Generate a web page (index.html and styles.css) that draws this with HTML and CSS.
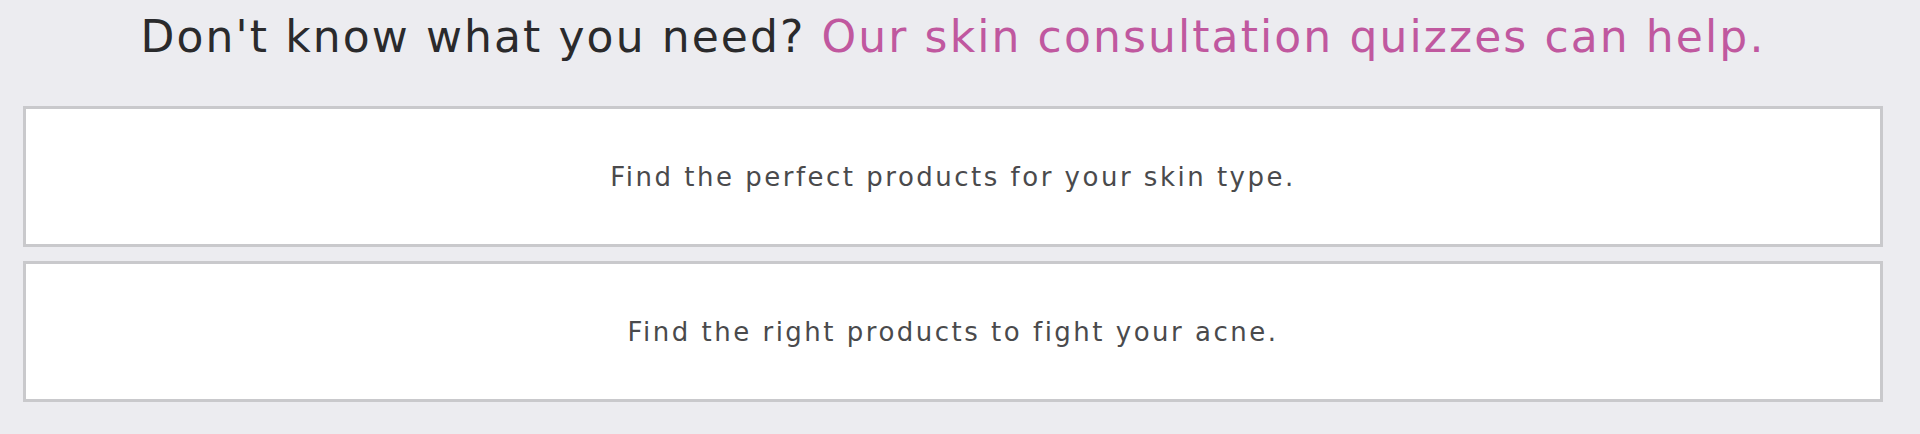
FILE: index.html
```html
<!DOCTYPE html>
<html lang="en">
<head>
<meta charset="utf-8">
<title>Skin consultation quizzes</title>
<link rel="stylesheet" href="styles.css">
</head>
<body>
<section class="quiz-section">
  <h2 class="quiz-heading">Don't know what you need? <span class="accent">Our skin consultation quizzes can help.</span></h2>
  <div class="quiz-list">
    <a class="quiz-card" href="#">Find the perfect products for your skin type.</a>
    <a class="quiz-card" href="#">Find the right products to fight your acne.</a>
  </div>
</section>
</body>
</html>
```

FILE: styles.css
```css
html, body {
  margin: 0;
  padding: 0;
}
body {
  background: #ececf0;
  font-family: "DejaVu Sans", "Open Sans", sans-serif;
  width: 1920px;
  height: 434px;
  overflow: hidden;
}
.quiz-section {
  padding: 0 37px 0 23px;
}
.quiz-heading {
  margin: 0;
  height: 106px;
  padding-top: 9px;
  box-sizing: border-box;
  text-align: center;
  font-weight: 400;
  font-size: 44px;
  line-height: 56px;
  letter-spacing: 2.1px;
  color: #2a2a2c;
}
.accent {
  color: #c0589f;
}
.quiz-list {
  display: flex;
  flex-direction: column;
  gap: 14px;
}
.quiz-card {
  display: flex;
  align-items: center;
  justify-content: center;
  height: 141px;
  box-sizing: border-box;
  background: #ffffff;
  border: 3px solid #c9c9cc;
  text-decoration: none;
  color: #4a4a4c;
  font-size: 26px;
  letter-spacing: 2.5px;
}
```
